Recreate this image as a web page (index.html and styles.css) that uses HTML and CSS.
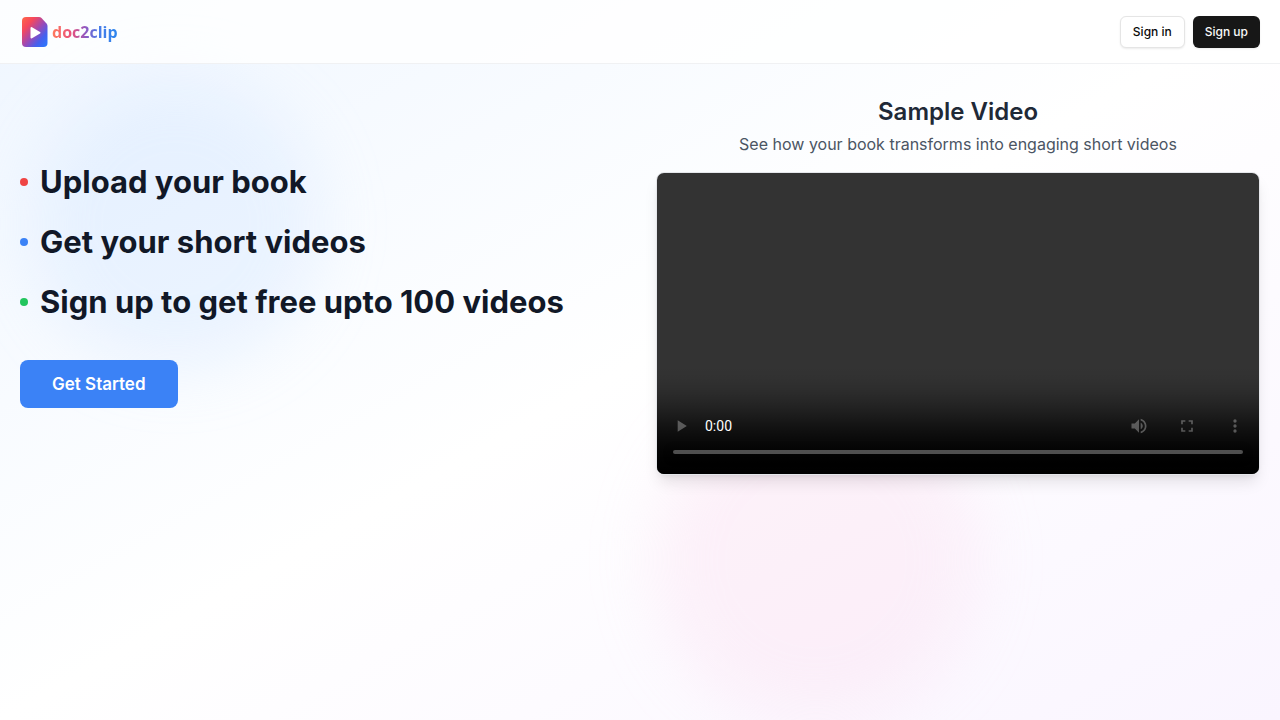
FILE: index.html
```
<!DOCTYPE html>
<html lang="en">
<head>
    <meta charset="UTF-8">
    <meta name="viewport" content="width=device-width, initial-scale=1.0">
    <title>doc2clip</title>
    <link rel="stylesheet" href="styles.css">
</head>
<body>
    <div class="backdrop">
        <div class="blob blob-blue"></div>
        <div class="blob blob-pink"></div>
    </div>

    <header class="navbar">
        <a href="#" class="logo">
            <svg class="logo-mark" viewBox="0 0 26 30" width="26" height="30" aria-hidden="true">
                <defs>
                    <linearGradient id="mark" x1="0" y1="0" x2="1" y2="1">
                        <stop offset="0" stop-color="#ff6848"/>
                        <stop offset="0.25" stop-color="#f6485c"/>
                        <stop offset="0.52" stop-color="#9d49b4"/>
                        <stop offset="0.75" stop-color="#4560ee"/>
                        <stop offset="1" stop-color="#287cff"/>
                    </linearGradient>
                </defs>
                <path fill="url(#mark)" d="M4 0h13q1.500 0 2.500 1l5 5.500q1 1.200 1 2.500v17q0 4-4 4H4q-4 0-4-4V4q0-4 4-4z"/>
                <path fill="#fff" stroke="#fff" stroke-width="2" stroke-linejoin="round" d="M9.500 11v9.500l8-4.750z"/>
            </svg>
            <span class="logo-text">doc2clip</span>
        </a>
        <div class="nav-actions">
            <button class="btn btn-outline">Sign in</button>
            <button class="btn btn-dark">Sign up</button>
        </div>
    </header>

    <main class="hero">
        <section class="intro">
            <ul class="steps">
                <li class="step step-red">Upload your book</li>
                <li class="step step-blue">Get your short videos</li>
                <li class="step step-green">Sign up to get free upto 100 videos</li>
            </ul>
            <button class="get-started">Get Started</button>
        </section>

        <section class="sample">
            <h2>Sample Video</h2>
            <p>See how your book transforms into engaging short videos</p>
            <div class="video-box">
                <video controls aria-label="Sample video"></video>
            </div>
        </section>
    </main>
</body>
</html>
```
FILE: styles.css
```
* {
    box-sizing: border-box;
}
body {
    margin: 0;
    min-height: 100vh;
    font-family: Inter, sans-serif;
    color: #111827;
}
.backdrop {
    position: absolute;
    inset: 0;
    z-index: -1;
    overflow: hidden;
    background: linear-gradient(to bottom right, #eff6ff, #ffffff, #faf5ff);
}
.blob {
    position: absolute;
    border-radius: 50%;
    filter: blur(32px);
}
.blob-blue {
    top: 80px;
    left: 32px;
    width: 288px;
    height: 288px;
    background: rgba(191, 219, 254, 0.25);
}
.blob-pink {
    bottom: 0;
    left: 656px;
    width: 320px;
    height: 320px;
    background: rgba(251, 207, 232, 0.25);
}
.navbar {
    display: flex;
    align-items: center;
    justify-content: space-between;
    height: 64px;
    padding: 0 20px;
    background: rgba(255, 255, 255, 0.8);
    border-bottom: 1px solid #f0f1f3;
}
.logo {
    display: flex;
    align-items: center;
    gap: 4px;
    padding-left: 2px;
    text-decoration: none;
}
.logo-text {
    font-family: "Open Sans", sans-serif;
    font-size: 16px;
    line-height: 24px;
    font-weight: 700;
    background: linear-gradient(to right, #ff7a5c, #e8507c 30%, #9358c0 50%, #4a7ce8 70%, #2a86ee);
    background-clip: text;
    -webkit-background-clip: text;
    color: transparent;
}
.nav-actions {
    display: flex;
    gap: 8px;
}
.btn {
    height: 32px;
    padding: 0 12px;
    border: 1px solid #e5e5e5;
    border-radius: 6px;
    font-family: inherit;
    font-size: 12px;
    font-weight: 500;
    cursor: pointer;
    box-shadow: 0 1px 2px rgba(0, 0, 0, 0.08);
}
.btn-outline {
    background: #fff;
    color: #0a0a0a;
}
.btn-dark {
    border: none;
    background: #171717;
    color: #fafafa;
}
.hero {
    display: grid;
    grid-template-columns: 1fr 1fr;
    gap: 32px;
    padding: 32px 20px;
}
.intro {
    padding-top: 64px;
}
.steps {
    list-style: none;
    margin: 0 0 36px;
    padding: 0;
}
.step {
    display: flex;
    align-items: center;
    gap: 12px;
    margin-bottom: 16px;
    font-size: 31px;
    line-height: 44px;
    font-weight: 700;
}
.step::before {
    content: "";
    width: 8px;
    height: 8px;
    border-radius: 50%;
}
.step-red::before {
    background: #ef4444;
}
.step-blue::before {
    background: #3b82f6;
}
.step-green::before {
    background: #22c55e;
}
.get-started {
    height: 48px;
    padding: 0 32px;
    border: none;
    border-radius: 8px;
    background: #3b82f6;
    color: #fff;
    font-family: inherit;
    font-size: 17px;
    font-weight: 600;
    cursor: pointer;
}
.sample {
    text-align: center;
}
.sample h2 {
    margin: 0 0 4px;
    font-size: 24px;
    line-height: 32px;
    font-weight: 600;
    color: #1f2937;
}
.sample p {
    margin: 0 0 16px;
    font-size: 16px;
    line-height: 24px;
    color: #4b5563;
}
.video-box {
    overflow: hidden;
    border: 1px solid #e5e7eb;
    border-radius: 8px;
    box-shadow: 0 10px 15px -3px rgba(0, 0, 0, 0.1), 0 4px 6px -4px rgba(0, 0, 0, 0.1);
}
.video-box video {
    display: block;
    width: 100%;
    aspect-ratio: 2 / 1;
}
```
